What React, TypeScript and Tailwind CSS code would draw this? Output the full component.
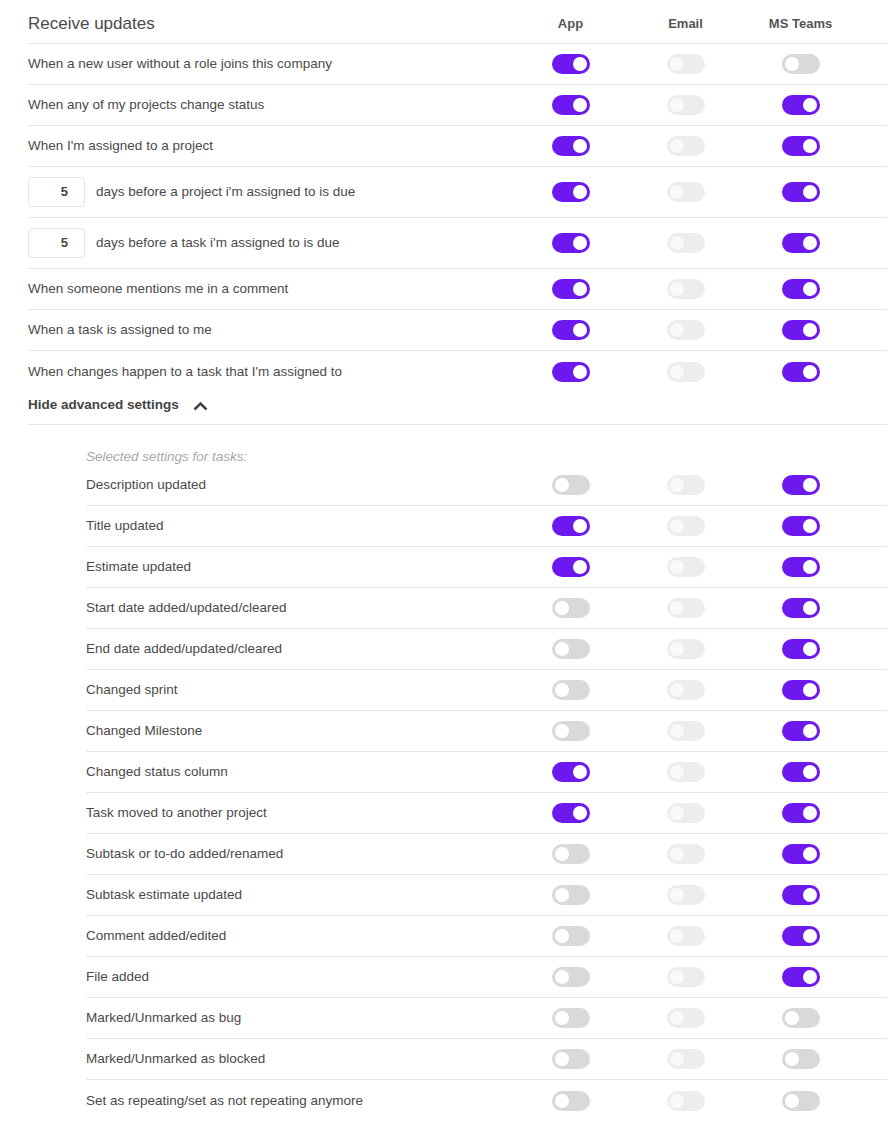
type Row = { label: string; app: boolean; teams: boolean; days?: number }

const mainRows: Row[] = [
  { label: 'When a new user without a role joins this company', app: true, teams: false },
  { label: 'When any of my projects change status', app: true, teams: true },
  { label: "When I'm assigned to a project", app: true, teams: true },
  { label: "days before a project i'm assigned to is due", app: true, teams: true, days: 5 },
  { label: "days before a task i'm assigned to is due", app: true, teams: true, days: 5 },
  { label: 'When someone mentions me in a comment', app: true, teams: true },
  { label: 'When a task is assigned to me', app: true, teams: true },
  { label: "When changes happen to a task that I'm assigned to", app: true, teams: true },
]

const taskRows: Row[] = [
  { label: 'Description updated', app: false, teams: true },
  { label: 'Title updated', app: true, teams: true },
  { label: 'Estimate updated', app: true, teams: true },
  { label: 'Start date added/updated/cleared', app: false, teams: true },
  { label: 'End date added/updated/cleared', app: false, teams: true },
  { label: 'Changed sprint', app: false, teams: true },
  { label: 'Changed Milestone', app: false, teams: true },
  { label: 'Changed status column', app: true, teams: true },
  { label: 'Task moved to another project', app: true, teams: true },
  { label: 'Subtask or to-do added/renamed', app: false, teams: true },
  { label: 'Subtask estimate updated', app: false, teams: true },
  { label: 'Comment added/edited', app: false, teams: true },
  { label: 'File added', app: false, teams: true },
  { label: 'Marked/Unmarked as bug', app: false, teams: false },
  { label: 'Marked/Unmarked as blocked', app: false, teams: false },
  { label: 'Set as repeating/set as not repeating anymore', app: false, teams: false },
]

function Toggle({ on, disabled }: { on: boolean; disabled?: boolean }) {
  if (disabled) {
    return (
      <span className="flex h-[20px] w-[38px] items-center rounded-full bg-[#ededed] px-[3px]">
        <span className="h-[14px] w-[14px] rounded-full bg-[#f9f9f9]" />
      </span>
    )
  }
  return (
    <span
      className={
        on
          ? 'flex h-[20px] w-[38px] items-center justify-end rounded-full bg-[#6c18ee] px-[3px]'
          : 'flex h-[20px] w-[38px] items-center rounded-full bg-[#d9d9d9] px-[3px]'
      }
    >
      <span className="h-[14px] w-[14px] rounded-full bg-white" />
    </span>
  )
}

function SettingRow({ row, last }: { row: Row; last?: boolean }) {
  return (
    <div
      className={`flex items-center pr-[29px] ${row.days ? 'h-[51px]' : 'h-[41px]'} ${
        last ? '' : 'border-b border-[#e6e6e6]'
      }`}
    >
      <div className="flex flex-1 items-center gap-[11px] text-[13.5px] text-[#4a4a4a]">
        {row.days && (
          <span className="flex h-[30px] w-[57px] items-center justify-end rounded-[4px] border border-[#e3e3e3] pr-[16px] text-[13px] font-bold text-[#444]">
            {row.days}
          </span>
        )}
        <span className="pt-[1px]">{row.label}</span>
      </div>
      <div className="flex w-[115px] justify-center">
        <Toggle on={row.app} />
      </div>
      <div className="flex w-[115px] justify-center">
        <Toggle on={false} disabled />
      </div>
      <div className="flex w-[115px] justify-center">
        <Toggle on={row.teams} />
      </div>
    </div>
  )
}

export default function App() {
  return (
    <div className="min-h-[1137px] bg-white pl-[28px] font-['Liberation_Sans',Arial,sans-serif] text-[#4a4a4a]">
      <div className="flex h-[44px] items-center border-b border-[#e6e6e6] pr-[29px] pt-[4px]">
        <h2 className="flex-1 text-[17px] text-[#4a4a4a]">Receive updates</h2>
        <div className="w-[115px] pt-[1px] text-center text-[13px] font-bold text-[#555]">App</div>
        <div className="w-[115px] pt-[1px] text-center text-[13px] font-bold text-[#555]">Email</div>
        <div className="w-[115px] pt-[1px] text-center text-[13px] font-bold text-[#555]">MS Teams</div>
      </div>

      {mainRows.map((r, i) => (
        <SettingRow key={r.label} row={r} last={i === mainRows.length - 1} />
      ))}

      <div className="flex h-[33px] items-center gap-[14px] border-b border-[#e6e6e6] pb-[5px]">
        <span className="text-[13.5px] font-bold text-[#444]">Hide advanced settings</span>
        <svg width="15" height="10" viewBox="0 0 15 10" fill="none">
          <polyline points="1.5,8.5 7.5,2.5 13.5,8.5" stroke="#444" strokeWidth="2.6" />
        </svg>
      </div>

      <div className="ml-[58px]">
        <p className="pt-[24px] text-[13.5px] leading-4 text-[#a8a8a8] italic">Selected settings for tasks:</p>
        {taskRows.map((r, i) => (
          <SettingRow key={r.label} row={r} last={i === taskRows.length - 1} />
        ))}
      </div>
    </div>
  )
}
